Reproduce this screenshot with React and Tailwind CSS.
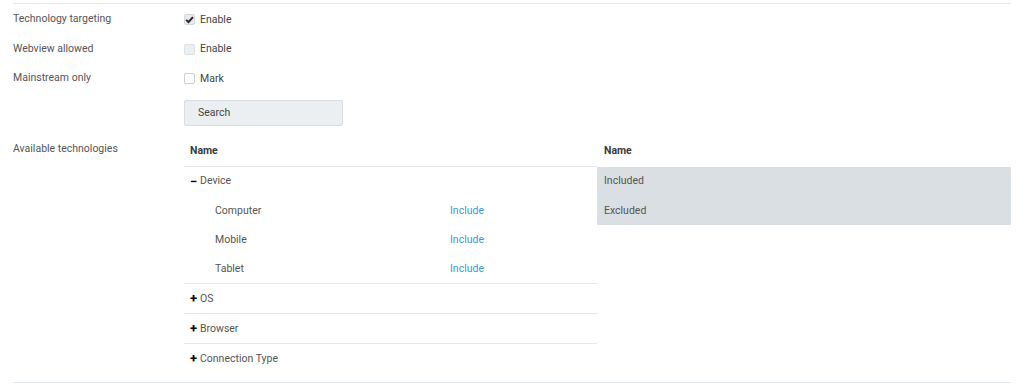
import React from 'react';

const font = { fontFamily: 'Roboto, "Liberation Sans", Arial, sans-serif' };

function Checkbox({ checked, disabled }) {
  return (
    <span
      className={`flex items-center justify-center w-[11px] h-[11px] rounded-[2px] border ${
        checked ? 'bg-[#e6eaed] border-[#d3d9de]' : disabled ? 'bg-[#eceff1] border-[#dde2e6]' : 'bg-white border-[#c9cfd4]'
      }`}
    >
      {checked && (
        <svg width="9" height="9" viewBox="0 0 10 10">
          <path d="M1.3 5.4 L3.9 7.9 L8.8 2.4" fill="none" stroke="#222" strokeWidth="2.2" />
        </svg>
      )}
    </span>
  );
}

function FormRow({ label, text, checked, disabled }) {
  return (
    <div className="flex h-[29.5px]">
      <div className="w-[171px] pt-[7px] text-[#555]">{label}</div>
      <label className="flex items-center gap-[5px] pt-[2px] text-[#444]">
        <Checkbox checked={checked} disabled={disabled} />
        <span>{text}</span>
      </label>
    </div>
  );
}

function Group({ open, name, children, last }) {
  return (
    <div className={last ? '' : 'border-b border-[#e3e8ec]'}>
      <div className={`flex items-center pl-[6px] text-[#555] ${open ? 'h-[29.5px]' : 'h-[29px]'}`}>
        <span className="w-[10px] font-bold text-black text-[13px] leading-none">{open ? '−' : '+'}</span>
        <span>{name}</span>
      </div>
      {children}
    </div>
  );
}

function Child({ name }) {
  return (
    <div className="flex items-center h-[29px] text-[#555]">
      <span className="w-[266px] pl-[31px]">{name}</span>
      <a className="text-[#3b98cf]">Include</a>
    </div>
  );
}

export default function App() {
  return (
    <div className="bg-white w-[1024px] h-[387px] px-[13px] pt-[3px] text-[10.5px]" style={font}>
      <div className="border-t border-[#e3e8ec]">
        <FormRow label="Technology targeting" text="Enable" checked />
        <FormRow label="Webview allowed" text="Enable" disabled />
        <FormRow label="Mainstream only" text="Mark" />
        <div className="flex pt-[7px]">
          <div className="w-[171px]" />
          <button className="w-[159px] h-[26px] text-left pl-[13px] bg-[#eceff1] border border-[#d7dde1] rounded-[2px] text-[#444]">
            Search
          </button>
        </div>

        <div className="flex mt-[10px]">
          <div className="w-[171px] pt-[5px] text-[#555]">Available technologies</div>
          <div className="w-[413px]">
            <div className="h-[31px] flex items-center pl-[6px] font-bold text-[#3a3a3a] border-b border-[#e3e8ec]">
              Name
            </div>
            <Group open name="Device">
              <Child name="Computer" />
              <Child name="Mobile" />
              <Child name="Tablet" />
            </Group>
            <Group name="OS" />
            <Group name="Browser" />
            <Group name="Connection Type" last />
          </div>
          <div className="w-[414px]">
            <div className="h-[31px] flex items-center pl-[7px] font-bold text-[#3a3a3a]">Name</div>
            <div className="bg-[#d9dfe3] text-[#555]">
              <div className="h-[29.5px] flex items-center pl-[7px]">Included</div>
              <div className="h-[29px] flex items-center pl-[7px]">Excluded</div>
            </div>
          </div>
        </div>
        <div className="mt-[9px] border-t border-[#e3e8ec]" />
      </div>
    </div>
  );
}
